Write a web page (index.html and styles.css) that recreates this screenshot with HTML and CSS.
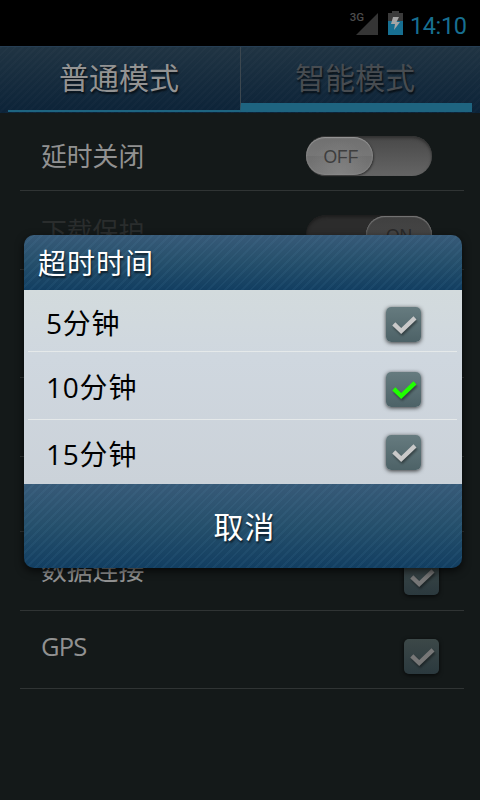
FILE: index.html
```html
<!DOCTYPE html>
<html lang="zh-CN">
<head>
<meta charset="utf-8">
<title>智能模式</title>
<link rel="stylesheet" href="styles.css">
</head>
<body>
<svg class="defs" width="0" height="0" aria-hidden="true">
  <symbol id="tick" viewBox="0 0 35 35"><path d="M7.8 16.8 L15.2 24 L29 10.8"/></symbol>
</svg>
<div class="screen">
  <header class="status">
    <span class="net">3G</span>
    <svg class="signal" width="22" height="22" viewBox="0 0 22 22"><path d="M22 0V22H0Z" fill="#353535"/></svg>
    <svg class="battery" width="15" height="24" viewBox="0 0 15 24">
      <path d="M4 0H11V2H15V10H0V2H4Z" fill="#3b3b3b"/>
      <path d="M0 10H15V24H0Z" fill="#176f91"/>
      <path d="M5 6H11L8.5 11H12L6 19L7 13H3Z" fill="#a5a5a5"/>
    </svg>
    <time class="clock">14:10</time>
  </header>
  <nav class="tabs">
    <div class="tab">普通模式</div>
    <div class="tab tab-current">智能模式</div>
  </nav>
  <main class="list">
    <div class="row"><span>延时关闭</span><div class="switch"><b>OFF</b></div></div>
    <div class="row row-dim"><span>下载保护</span><div class="switch switch-on"><b>ON</b></div></div>
    <div class="row"></div>
    <div class="row"></div>
    <div class="row"></div>
    <div class="row row-data"><span>数据连接</span><svg class="check"><use href="#tick"/></svg></div>
    <div class="row row-gps"><span>GPS</span><svg class="check"><use href="#tick"/></svg></div>
  </main>
  <section class="dialog">
    <h1 class="title">超时时间</h1>
    <div class="options">
      <div class="option"><span>5分钟</span><svg class="check"><use href="#tick"/></svg></div>
      <div class="option"><span>10分钟</span><svg class="check check-on"><use href="#tick"/></svg></div>
      <div class="option"><span>15分钟</span><svg class="check"><use href="#tick"/></svg></div>
    </div>
    <div class="cancel">取消</div>
  </section>
</div>
</body>
</html>
```
FILE: styles.css
```css
* { box-sizing: border-box; }
body { margin: 0; background: #141919; font-family: "Open Sans", "Noto Sans CJK SC", sans-serif; }
.defs { position: absolute; }
.screen { position: relative; width: 480px; height: 800px; overflow: hidden; background: #141919; }

.status { height: 46px; background: #000; display: flex; align-items: flex-start; justify-content: flex-end; padding-right: 13px; }
.net { font: 500 11.5px/12px Roboto, sans-serif; color: #4c4c4c; margin: 11px -8px 0 0; }
.signal { margin: 13px 10px 0 0; }
.battery { margin: 11px 7px 0 0; }
.clock { font: 23.5px/28px Roboto, sans-serif; color: #176f91; margin-top: 12px; letter-spacing: -0.4px; width: 57px; white-space: nowrap; }

.tabs {
  height: 67px; display: flex; padding: 0 8px; border-top: 1px solid #263e54;
  background:
    repeating-linear-gradient(135deg, rgba(255,255,255,.015) 0 2px, transparent 2px 5px),
    linear-gradient(#203443, #0c2338);
}
.tab { width: 232px; height: 65px; border-bottom: 2px solid #1e6480; padding: 9px 10px 0 0; text-align: center; font-size: 30px; line-height: 43px; color: #939393; text-shadow: 1px 2px 2px rgba(0,0,0,.7); }
.tab-current { border-left: 1px solid #3c474f; border-bottom: 9px solid #1e6480; padding-right: 3px; color: #474c51; }

.list { padding: 0 16px 0 20px; display: grid; grid-template-rows: 78px 79px 108px 79px 75px 79px 78px; }
.row { border-bottom: 1px solid #303434; padding: 8px 25px 0 21px; display: flex; align-items: center; justify-content: space-between; font-size: 25.8px; line-height: 36px; color: #919191; }
.row:first-child, .row-dim { padding-right: 32px; }
.row-dim { color: #2a2d2d; padding-top: 9px; }
.row-dim span { margin-top: -8px; }
.row-data { padding-top: 4px; }
.row-data span { margin-top: -6px; }
.row-gps { padding-top: 0; }
.row-gps span { margin-top: -8px; font-size: 25.5px; letter-spacing: -.8px; }
.row-gps .check { margin-top: 14px; }
.row-data .check { margin-top: 9px; }
.switch { width: 126px; height: 40px; border-radius: 20px; background: linear-gradient(#484848, #656565); box-shadow: inset 0 2px 3px #303030; }
.switch b { display: block; width: 67px; height: 38px; margin-top: 1px; border-radius: 19px; background: radial-gradient(ellipse at 50% 100%, #828282, transparent 65%), linear-gradient(#707070, #777 50%, #707070 51%, #777); box-shadow: inset 0 1px 1px #969696, inset 0 0 2px #999, 1px 1px 2px #333; font: 17.5px/41px "Liberation Sans", sans-serif; text-align: center; color: #3e3e3e; padding-left: 3px; }
.switch-on { background: #2c2c2c; box-shadow: inset 0 2px 3px #1c1c1c; }
.switch-on b { margin-left: 60px; width: 66px; line-height: 40px; background: linear-gradient(#404040, #4a4a4a); color: #292929; box-shadow: inset 0 1px 1px #777, inset 0 0 2px #777; padding-left: 0; }

.check { width: 35px; height: 35px; border-radius: 5px; background: linear-gradient(#667b7f, #4d6267); box-shadow: 0 1px 4px rgba(0,0,0,.75); fill: none; stroke: #c9c9c9; stroke-width: 4.4px; flex: none; }
.check use { filter: drop-shadow(1px 2px 1px rgba(0,0,0,.4)); }
.check-on { stroke: #20ff00; }
.row .check { background: linear-gradient(#3c4848, #2b393e); stroke: #777; }

.dialog { position: absolute; left: 24px; top: 235px; width: 438px; height: 333px; border-radius: 10px; overflow: hidden; box-shadow: 0 3px 8px rgba(0,0,0,.7); }
.title, .cancel {
  margin: 0; color: #fff; font-weight: 400; text-shadow: 1px 2px 2px rgba(0,0,0,.65);
  background:
    repeating-linear-gradient(135deg, rgba(110,170,205,.07) 0 2px, transparent 2px 6px),
    linear-gradient(#375a78, #254f6b 50%, #123e61);
}
.title { height: 55px; padding-left: 14px; font-size: 28px; line-height: 56px; letter-spacing: 1px; }
.cancel { height: 84px; padding-left: 3px; font-size: 30px; line-height: 86px; letter-spacing: 1px; text-align: center; }
.options { height: 194px; padding: 0 5px 0 4px; background: linear-gradient(#d3dbdd, #cfd7df 35%, #cbd2d9); display: grid; grid-template-rows: 62px 68px 64px; }
.option { display: flex; justify-content: space-between; align-items: center; padding: 7px 36px 0 18px; font-size: 28px; line-height: 40px; letter-spacing: .8px; color: #000; border-bottom: 1px solid #e5e9ea; }
.option:nth-child(2) { padding-top: 8px; }
.option:last-child { border: 0; padding-top: 0; }
.option span { margin-top: -2px; }
.option:nth-child(2) span { margin-top: -6px; }
.option:last-child span { margin-top: 3px; }
```
